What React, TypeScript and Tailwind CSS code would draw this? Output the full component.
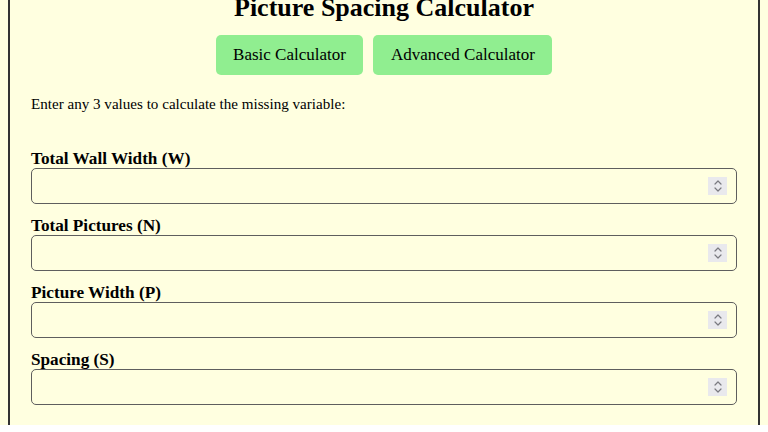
const fields = ['Total Wall Width (W)', 'Total Pictures (N)', 'Picture Width (P)', 'Spacing (S)']

// Chrome only draws spin buttons on hover, so show them as a static overlay
function Spinner(): React.JSX.Element {
  return (
    <div className="pointer-events-none absolute right-[10px] top-1/2 flex h-[18px] w-[19px] -translate-y-1/2 items-center justify-center bg-[#e9e9ed]">
      <svg width="10" height="14" viewBox="0 0 10 14" fill="none" stroke="#7a7a80" strokeWidth="1.2" strokeLinecap="round" strokeLinejoin="round">
        <path d="M2 5 L5 2 L8 5" />
        <path d="M2 9 L5 12 L8 9" />
      </svg>
    </div>
  )
}

export default function App(): React.JSX.Element {
  return (
    <div className="min-h-screen bg-[#ffffe0] px-[8px] font-['Liberation_Serif','Times_New_Roman',serif] text-black">
      <div className="min-h-[432px] border-x-2 border-[#333] px-[21px]">
        <h1 className="-mt-[7px] text-center text-[26px] font-bold leading-[30px]">Picture Spacing Calculator</h1>
        <div className="mt-[12px] flex justify-center gap-[10px]">
          <button className="rounded-[5px] bg-[#90ee90] px-[17.5px] py-[10px] text-[17px] leading-[20px]">Basic Calculator</button>
          <button className="rounded-[5px] bg-[#90ee90] px-[17.5px] py-[10px] text-[17px] leading-[20px]">Advanced Calculator</button>
        </div>
        <p className="mt-[21px] text-[15.1px] leading-[17px]">Enter any 3 values to calculate the missing variable:</p>
        <div className="mt-[35px] flex flex-col gap-[11px]">
          {fields.map((f) => (
            <div key={f}>
              <label className="block pt-[1px] text-[17.2px] font-bold leading-[19px]">{f}</label>
              <div className="relative">
                <input
                  type="number"
                  className="block h-[36px] w-full rounded-[5px] border-[1.5px] border-[#5e5e5e] bg-transparent px-[8px] text-[17px]"
                />
                <Spinner />
              </div>
            </div>
          ))}
        </div>
      </div>
    </div>
  )
}
